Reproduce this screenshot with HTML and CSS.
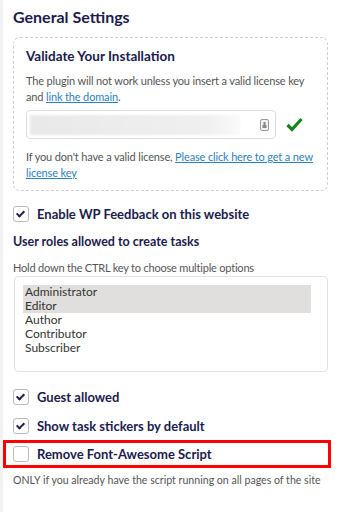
FILE: index.html
```html
<!DOCTYPE html>
<html lang="en">
<head>
    <meta charset="UTF-8">
    <title>General Settings</title>
    <link rel="stylesheet" href="styles.css">
</head>
<body>
    <div class="page">
        <h1>General Settings</h1>

        <div class="license-box">
            <h2>Validate Your Installation</h2>
            <p>The plugin will not work unless you insert a valid license key and <a href="#">link the domain</a>.</p>
            <div class="license-row">
                <div class="license-input">
                    <div class="blur"></div>
                    <svg class="key-icon" width="9" height="12" viewBox="0 0 9 12">
                        <rect x="0.5" y="0.5" width="8" height="11" rx="1.5" fill="#f2f2f2" stroke="#999"/>
                        <rect x="3.5" y="3" width="2" height="3" fill="#888"/>
                        <rect x="2.5" y="6" width="4" height="3" fill="#888"/>
                    </svg>
                </div>
                <svg class="ok" width="17" height="15" viewBox="0 0 17 15">
                    <path d="M1.5 8 L6 12.5 L15.5 2" fill="none" stroke="#12861b" stroke-width="3.2"/>
                </svg>
            </div>
            <p class="after">If you don't have a valid license, <a href="#">Please click here to get a new license key</a></p>
        </div>

        <label class="check first">
            <span class="box on"></span>
            <span>Enable WP Feedback on this website</span>
        </label>

        <h3>User roles allowed to create tasks</h3>
        <p class="hint">Hold down the CTRL key to choose multiple options</p>
        <div class="roles">
            <div class="role sel">Administrator</div>
            <div class="role sel">Editor</div>
            <div class="role">Author</div>
            <div class="role">Contributor</div>
            <div class="role">Subscriber</div>
        </div>

        <label class="check">
            <span class="box on"></span>
            <span>Guest allowed</span>
        </label>
        <label class="check">
            <span class="box on"></span>
            <span>Show task stickers by default</span>
        </label>
        <label class="check marked">
            <span class="box"></span>
            <span>Remove Font-Awesome Script</span>
        </label>
        <p class="note">ONLY if you already have the script running on all pages of the site</p>
    </div>
</body>
</html>
```

FILE: styles.css
```css
body {
    margin: 0;
    background-color: #fff;
    font-family: Lato, "Open Sans", sans-serif;
    color: #1b1b4d;
}
.page {
    border-left: 3px solid #f1f1f1;
    padding: 6px 12px 20px 10px;
    min-height: 512px;
    box-sizing: border-box;
}
h1 {
    font-size: 16px;
    margin: 0 0 9px;
    line-height: 22px;
}
.license-box {
    border: 1px dashed #cfcfcf;
    border-radius: 7px;
    padding: 10px 12px 9px;
}
h2 {
    font-size: 13.5px;
    line-height: 17px;
    margin: 0 0 8px;
}
.license-box p {
    font-size: 11px;
    letter-spacing: -0.15px;
    line-height: 16px;
    color: #555;
    margin: 0;
}
a {
    color: #2c7fc0;
}
.license-row {
    display: flex;
    align-items: center;
    gap: 10px;
    margin: 5px 0 10px;
}
.license-input {
    width: 250px;
    height: 29px;
    border: 1px solid #ddd;
    border-radius: 4px;
    box-sizing: border-box;
    display: flex;
    align-items: center;
    padding: 0 6px 0 3px;
    gap: 20px;
}
.blur {
    flex: 1;
    height: 20px;
    background: linear-gradient(to right, #e9e9e9, #f0f0f0 85%, #fafafa);
    filter: blur(1px);
}
.check {
    display: flex;
    align-items: center;
    gap: 8px;
    font-size: 13px;
    font-weight: bold;
    height: 29px;
}
.check.first {
    margin-top: 8px;
}
.box {
    width: 14px;
    height: 14px;
    border: 1px solid #bbb;
    border-radius: 3px;
    position: relative;
    flex: none;
}
.box.on::after {
    content: "";
    position: absolute;
    left: 4px;
    top: 2px;
    width: 3px;
    height: 6px;
    border: solid #1b1b4d;
    border-width: 0 2px 2px 0;
    transform: rotate(45deg);
}
h3 {
    font-size: 12.5px;
    margin: 3px 0 0;
    line-height: 22px;
}
.hint {
    font-size: 11px;
    letter-spacing: -0.2px;
    line-height: 14px;
    color: #555;
    margin: 8px 0 1px;
}
.roles {
    border: 1px solid #e2e2e2;
    border-radius: 4px;
    height: 96px;
    box-sizing: border-box;
    padding: 8px 16px 0 8px;
    margin: 0 0 10px 1px;
    font-size: 12px;
    color: #333;
}
.role {
    line-height: 14px;
    padding-left: 2px;
}
.role.sel {
    background-color: #e0dfdd;
}
.marked {
    border: 3px solid #f00;
    margin: 0 -3px 0 -10px;
    padding-left: 7px;
    height: 28px;
    box-sizing: border-box;
}
.note {
    font-size: 10.6px;
    line-height: 14px;
    color: #555;
    margin: 5px 0 0;
}
```
